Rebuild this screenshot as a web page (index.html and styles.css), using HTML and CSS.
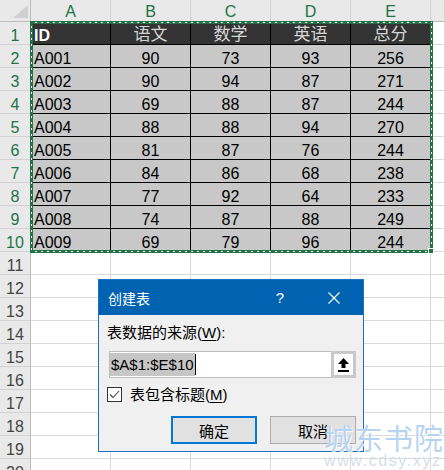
FILE: index.html
```html
<!DOCTYPE html>
<html lang="zh-CN">
<head>
<meta charset="utf-8">
<title>创建表</title>
<link rel="stylesheet" href="styles.css">
</head>
<body>
<div class="sheet">
  <div class="grid">
    <div class="c corner"></div><div class="c ch on">A</div><div class="c ch on">B</div><div class="c ch on">C</div><div class="c ch on">D</div><div class="c ch on">E</div><div class="c ch"></div>

    <div class="c rh on">1</div><div class="c hd l id">ID</div><div class="c hd zh">语文</div><div class="c hd zh">数学</div><div class="c hd zh">英语</div><div class="c hd zh">总分</div><div class="c"></div>
    <div class="c rh on">2</div><div class="c dc l">A001</div><div class="c dc">90</div><div class="c dc">73</div><div class="c dc">93</div><div class="c dc">256</div><div class="c"></div>
    <div class="c rh on">3</div><div class="c dc l">A002</div><div class="c dc">90</div><div class="c dc">94</div><div class="c dc">87</div><div class="c dc">271</div><div class="c"></div>
    <div class="c rh on">4</div><div class="c dc l">A003</div><div class="c dc">69</div><div class="c dc">88</div><div class="c dc">87</div><div class="c dc">244</div><div class="c"></div>
    <div class="c rh on">5</div><div class="c dc l">A004</div><div class="c dc">88</div><div class="c dc">88</div><div class="c dc">94</div><div class="c dc">270</div><div class="c"></div>
    <div class="c rh on">6</div><div class="c dc l">A005</div><div class="c dc">81</div><div class="c dc">87</div><div class="c dc">76</div><div class="c dc">244</div><div class="c"></div>
    <div class="c rh on">7</div><div class="c dc l">A006</div><div class="c dc">84</div><div class="c dc">86</div><div class="c dc">68</div><div class="c dc">238</div><div class="c"></div>
    <div class="c rh on">8</div><div class="c dc l">A007</div><div class="c dc">77</div><div class="c dc">92</div><div class="c dc">64</div><div class="c dc">233</div><div class="c"></div>
    <div class="c rh on">9</div><div class="c dc l">A008</div><div class="c dc">74</div><div class="c dc">87</div><div class="c dc">88</div><div class="c dc">249</div><div class="c"></div>
    <div class="c rh on">10</div><div class="c dc l">A009</div><div class="c dc">69</div><div class="c dc">79</div><div class="c dc">96</div><div class="c dc">244</div><div class="c"></div>

    <div class="c rh">11</div><div class="c"></div><div class="c"></div><div class="c"></div><div class="c"></div><div class="c"></div><div class="c"></div>
    <div class="c rh">12</div><div class="c"></div><div class="c"></div><div class="c"></div><div class="c"></div><div class="c"></div><div class="c"></div>
    <div class="c rh">13</div><div class="c"></div><div class="c"></div><div class="c"></div><div class="c"></div><div class="c"></div><div class="c"></div>
    <div class="c rh">14</div><div class="c"></div><div class="c"></div><div class="c"></div><div class="c"></div><div class="c"></div><div class="c"></div>
    <div class="c rh">15</div><div class="c"></div><div class="c"></div><div class="c"></div><div class="c"></div><div class="c"></div><div class="c"></div>
    <div class="c rh">16</div><div class="c"></div><div class="c"></div><div class="c"></div><div class="c"></div><div class="c"></div><div class="c"></div>
    <div class="c rh">17</div><div class="c"></div><div class="c"></div><div class="c"></div><div class="c"></div><div class="c"></div><div class="c"></div>
    <div class="c rh">18</div><div class="c"></div><div class="c"></div><div class="c"></div><div class="c"></div><div class="c"></div><div class="c"></div>
    <div class="c rh">19</div><div class="c"></div><div class="c"></div><div class="c"></div><div class="c"></div><div class="c"></div><div class="c"></div>
    <div class="c rh">20</div><div class="c"></div><div class="c"></div><div class="c"></div><div class="c"></div><div class="c"></div><div class="c"></div>
  </div>

  <div class="sel"></div>
  <div class="handle"></div>

  <div class="dialog">
    <div class="titlebar">
      <span class="title">创建表</span>
      <span class="qm">?</span>
      <svg class="close" width="12" height="12" viewBox="0 0 12 12"><path d="M0.5 0.5 L11.5 11.5 M11.5 0.5 L0.5 11.5" stroke="#fff" stroke-width="1.2" fill="none"/></svg>
    </div>
    <div class="body">
      <div class="label">表数据的来源(<u>W</u>):</div>
      <div class="inrow">
        <div class="input"><span class="selected">$A$1:$E$10</span><span class="caret"></span></div>
        <div class="pick">
          <svg width="11" height="14" viewBox="0 0 11 14"><path d="M5.5 0 L11 6 H7.5 V10 H3.5 V6 H0 Z" fill="#000"/><rect x="0" y="12" width="11" height="2" fill="#000"/></svg>
        </div>
      </div>
      <div class="chkrow">
        <span class="box"><svg width="13" height="13" viewBox="0 0 13 13"><path d="M2 6.5 L5 9.5 L11 3" stroke="#444" stroke-width="1.1" fill="none"/></svg></span>
        <span class="chklabel">表包含标题(<u>M</u>)</span>
      </div>
      <div class="btnrow">
        <div class="btn primary">确定</div>
        <div class="btn">取消</div>
      </div>
    </div>
  </div>

  <div class="wm">
    <div class="wm1">城东书院</div>
    <div class="wm2">www.cdsy.xyz</div>
  </div>
</div>
</body>
</html>
```
FILE: styles.css
```css
html, body {
  margin: 0;
  padding: 0;
  background: #fff;
  overflow: hidden;
}

.sheet {
  position: relative;
  width: 445px;
  height: 470px;
  overflow: hidden;
  font-family: "Liberation Sans", "Noto Sans CJK SC", sans-serif;
}

.grid {
  display: grid;
  grid-template-columns: 31px repeat(5, 80px) 1fr;
  grid-template-rows: 22px;
  grid-auto-rows: 23px;
}

.c {
  box-sizing: border-box;
  border-right: 1px solid #dadada;
  border-bottom: 1px solid #dadada;
  font-size: 16px;
  line-height: 22px;
  padding-top: 3px;
  text-align: center;
  color: #000;
  white-space: nowrap;
  overflow: visible;
}

.corner {
  position: relative;
  background: #e9e9e9;
  border-right: 1px solid #bcbcbc;
  border-bottom: 1px solid #bcbcbc;
  padding: 0;
}
.corner::after {
  content: "";
  position: absolute;
  right: 2px;
  bottom: 3px;
  width: 15px;
  height: 13px;
  background: #cfcfcf;
  clip-path: polygon(100% 0, 100% 100%, 0 100%);
}

.ch {
  background: #e9e9e9;
  border-right: 1px solid #d2d2d2;
  border-bottom: 1px solid #bcbcbc;
  font-size: 16px;
  line-height: 20px;
  padding-top: 2px;
  color: #444;
}

.rh {
  background: #e9e9e9;
  border-right: 1px solid #bcbcbc;
  border-bottom: 1px solid #d2d2d2;
  color: #444;
}

.on {
  color: #217346;
}

.hd {
  background: #333;
  color: #d6d6d6;
  border-right: 1px solid #000;
  border-bottom: 1px solid #000;
}

.zh {
  font-size: 17px;
  line-height: 21px;
  padding-top: 2px;
}

.id {
  color: #fff;
  font-weight: bold;
}

.dc {
  background: #c8c8c8;
  border-right: 1px solid #000;
  border-bottom: 1px solid #000;
}

.l {
  text-align: left;
  padding-left: 3px;
}

/* selection marquee */
.sel {
  position: absolute;
  left: 30px;
  top: 21px;
  width: 403px;
  height: 232px;
  box-sizing: border-box;
  border: 3px solid #217346;
}
.sel::before {
  content: "";
  position: absolute;
  inset: -2px;
  background:
    repeating-linear-gradient(90deg, transparent 0 4px, #fff 4px 6px) top left / 100% 1px no-repeat,
    repeating-linear-gradient(90deg, transparent 0 4px, #fff 4px 6px) bottom left / 100% 1px no-repeat,
    repeating-linear-gradient(180deg, transparent 0 4px, #fff 4px 6px) top left / 1px 100% no-repeat,
    repeating-linear-gradient(180deg, transparent 0 4px, #fff 4px 6px) top right / 1px 100% no-repeat;
}

.handle {
  position: absolute;
  left: 428px;
  top: 248px;
  width: 6px;
  height: 6px;
  background: #217346;
  border: 1px solid #fff;
  box-sizing: border-box;
}

/* dialog */
.dialog {
  position: absolute;
  left: 98px;
  top: 279px;
  width: 266px;
  box-sizing: border-box;
  border: 1px solid #1f6fc0;
  background: #f0f0f0;
  font-family: "Liberation Sans", "Noto Sans CJK SC", sans-serif;
  color: #000;
}

.titlebar {
  height: 35px;
  background: #0063b1;
  color: #fff;
  display: flex;
  align-items: center;
}

.title {
  font-size: 14px;
  padding-left: 9px;
}

.qm {
  margin-left: auto;
  font-size: 15px;
}

.close {
  margin-left: 44px;
  margin-right: 23px;
}

.body {
  padding: 8px 7px 7px 8px;
  display: flex;
  flex-direction: column;
}

.label {
  font-size: 15px;
  line-height: 20px;
}

u {
  text-decoration-thickness: 1px;
  text-underline-offset: 2px;
}

.inrow {
  display: flex;
  margin-top: 8px;
  margin-left: 2px;
  height: 27px;
}

.input {
  box-sizing: border-box;
  width: 222px;
  height: 27px;
  background: #fff;
  border: 1px solid #bdbdbd;
  border-right: none;
  display: flex;
  align-items: stretch;
  padding: 1px 0 1px 0;
}

.selected {
  background: #c6c6c6;
  font-size: 15px;
  line-height: 23px;
  padding: 0 1px;
}

.caret {
  width: 1px;
  background: #000;
  margin: 1px 0;
}

.pick {
  box-sizing: border-box;
  width: 25px;
  height: 27px;
  border: 3px solid #c9c9c9;
  background: #fff;
  display: flex;
  align-items: center;
  justify-content: center;
}

.chkrow {
  display: flex;
  align-items: center;
  margin-top: 7px;
  height: 19px;
}

.box {
  box-sizing: border-box;
  width: 15px;
  height: 15px;
  border: 1px solid #333;
  background: #fff;
  display: flex;
  align-items: center;
  justify-content: center;
}

.chklabel {
  font-size: 15px;
  margin-left: 8px;
  line-height: 19px;
}

.btnrow {
  display: flex;
  justify-content: flex-end;
  gap: 13px;
  margin-top: 12px;
}

.btn {
  box-sizing: border-box;
  width: 86px;
  height: 28px;
  background: #e1e1e1;
  border: 1px solid #adadad;
  font-size: 15px;
  display: flex;
  align-items: center;
  justify-content: center;
}

.btn.primary {
  border: 2px solid #0078d7;
}

/* watermark */
.wm {
  position: absolute;
  left: 324px;
  top: 421px;
  pointer-events: none;
  white-space: nowrap;
}

.wm1 {
  font-family: "Noto Sans CJK SC", sans-serif;
  font-size: 29px;
  line-height: 32px;
  letter-spacing: 1px;
  color: rgba(110, 170, 230, 0.5);
  text-shadow: 0 0 1px #fff, 1px 1px 0 rgba(255,255,255,0.8);
}

.wm2 {
  font-family: "Liberation Sans", sans-serif;
  font-size: 16px;
  line-height: 16px;
  letter-spacing: 1.6px;
  color: rgba(160, 175, 195, 0.45);
  text-shadow: 0 0 1px #fff;
}
```
